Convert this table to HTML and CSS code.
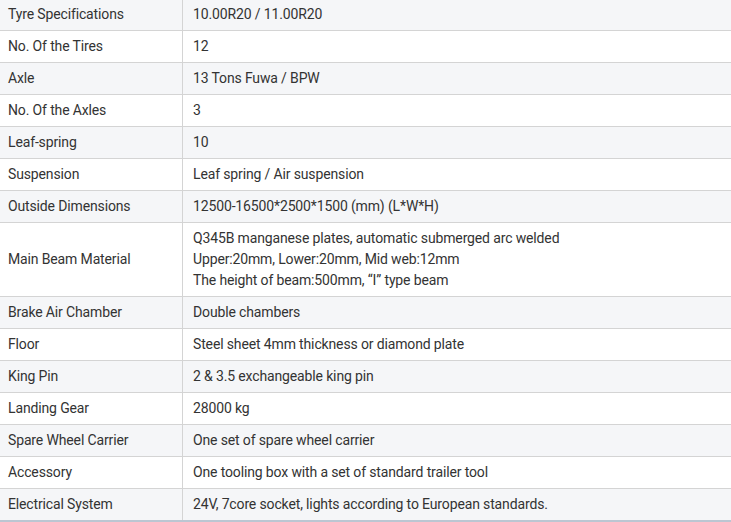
FILE: index.html
```html
<!DOCTYPE html>
<html>
<head>
<meta charset="utf-8">
<link rel="stylesheet" href="styles.css">
</head>
<body>
<table class="specs">
<tbody>
<tr><td class="k">Tyre Specifications</td><td class="v">10.00R20 / 11.00R20</td></tr>
<tr><td class="k">No. Of the Tires</td><td class="v">12</td></tr>
<tr><td class="k">Axle</td><td class="v">13 Tons Fuwa / BPW</td></tr>
<tr><td class="k">No. Of the Axles</td><td class="v">3</td></tr>
<tr><td class="k">Leaf-spring</td><td class="v">10</td></tr>
<tr><td class="k">Suspension</td><td class="v">Leaf spring / Air suspension</td></tr>
<tr><td class="k">Outside Dimensions</td><td class="v">12500-16500*2500*1500 (mm) (L*W*H)</td></tr>
<tr><td class="k">Main Beam Material</td><td class="v">Q345B manganese plates, automatic submerged arc welded<br>Upper:20mm, Lower:20mm, Mid web:12mm<br>The height of beam:500mm, “I” type beam</td></tr>
<tr><td class="k">Brake Air Chamber</td><td class="v">Double chambers</td></tr>
<tr><td class="k">Floor</td><td class="v">Steel sheet 4mm thickness or diamond plate</td></tr>
<tr><td class="k">King Pin</td><td class="v">2 &amp; 3.5 exchangeable king pin</td></tr>
<tr><td class="k">Landing Gear</td><td class="v">28000 kg</td></tr>
<tr><td class="k">Spare Wheel Carrier</td><td class="v">One set of spare wheel carrier</td></tr>
<tr><td class="k">Accessory</td><td class="v">One tooling box with a set of standard trailer tool</td></tr>
<tr class="last"><td class="k">Electrical System</td><td class="v">24V, 7core socket, lights according to European standards.</td></tr>
</tbody>
</table>
</body>
</html>
```

FILE: styles.css
```css
html, body {
  margin: 0;
  padding: 0;
  background: #ffffff;
}
body {
  font-family: Roboto, "Liberation Sans", sans-serif;
  font-size: 14px;
  letter-spacing: -0.14px;
  color: #333333;
}
.specs {
  width: 731px;
  border-collapse: collapse;
  margin-top: -1px;
  table-layout: fixed;
}
.specs tr:nth-child(odd) {
  background: #f5f6f8;
}
.specs td {
  border-bottom: 1px solid #d4d4d4;
  line-height: 21px;
  padding: 5px 10px;
  vertical-align: middle;
  height: 21px;
}
.specs td.k {
  width: 164px;
  padding-left: 8px;
  border-right: 1px solid #d4d4d4;
}
.specs tr.last td {
  border-bottom: 2px solid #bcc6d2;
}
```
